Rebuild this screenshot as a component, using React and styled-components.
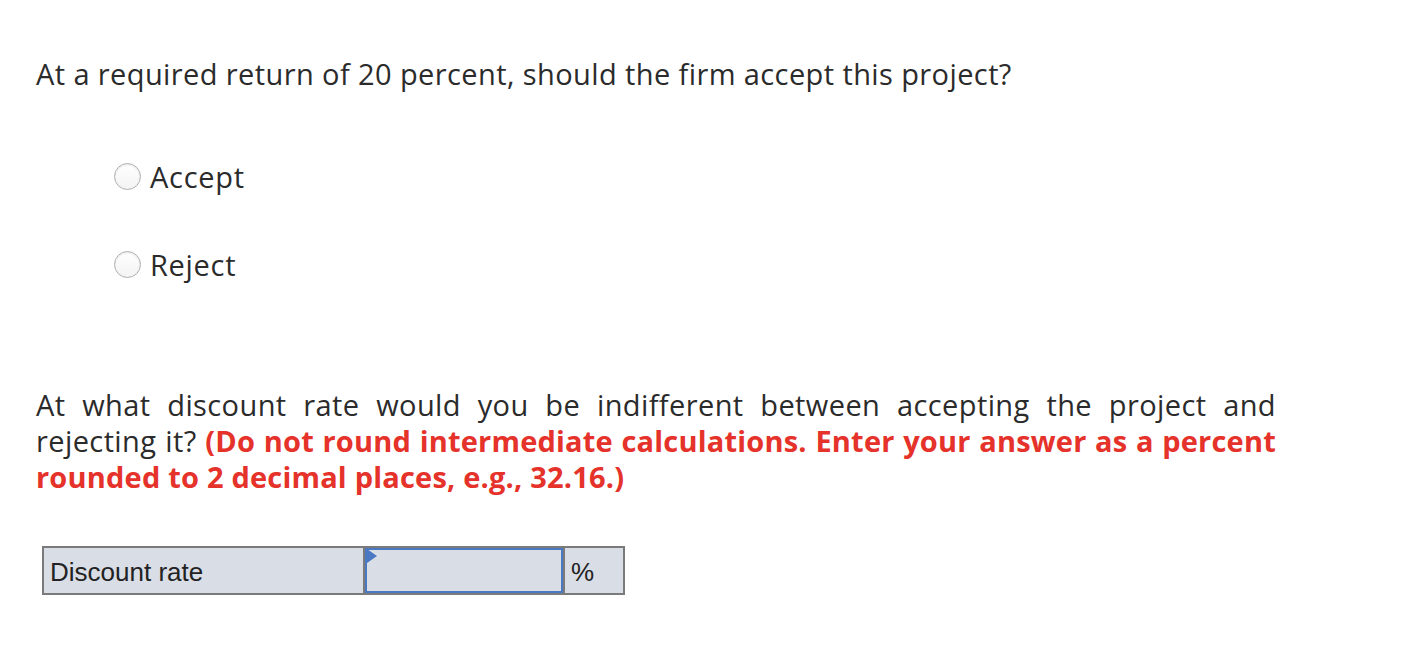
import React from 'react';
import styled, { createGlobalStyle } from 'styled-components';

const GlobalStyle = createGlobalStyle`
  html, body {
    margin: 0;
    padding: 0;
    background: #ffffff;
  }
  body {
    font-family: "Open Sans", Lato, Arial, sans-serif;
    color: #2b2b2b;
    font-variant-ligatures: none;
  }
`;

const Page = styled.div`
  width: 1240px;
  padding: 55px 0 0 36px;
`;

const Question = styled.p`
  margin: 0;
  font-size: 29px;
  line-height: 38px;
  letter-spacing: 0.4px;
`;

const Options = styled.div`
  display: flex;
  flex-direction: column;
  gap: 53px;
  padding: 66px 0 0 78px;
`;

const Option = styled.label`
  display: flex;
  align-items: center;
  gap: 9px;
  font-size: 29px;
  line-height: 35px;
  letter-spacing: 0.7px;
`;

const Radio = styled.span`
  width: 27px;
  height: 27px;
  border-radius: 50%;
  border: 1px solid #b0b0b0;
  background: linear-gradient(#ffffff, #f3f3f3);
  box-shadow: inset 0 1px 2px rgba(0, 0, 0, 0.1);
  box-sizing: border-box;
`;

const Paragraph = styled.div`
  margin: 105px 0 0;
  font-size: 29px;
  line-height: 36px;
  letter-spacing: 0.4px;
`;

const Line = styled.span`
  display: block;
  text-align: ${(p) => (p.$last ? 'left' : 'justify')};
  text-align-last: ${(p) => (p.$last ? 'left' : 'justify')};
`;

const Hint = styled.strong`
  color: #e5322a;
  font-weight: 700;
  letter-spacing: 0.2px;
`;

const Table = styled.table`
  margin: 51px 0 0 6px;
  border-collapse: collapse;
  font-family: "Liberation Sans", Arial, sans-serif;
  font-size: 26px;
  color: #222;
`;

const Cell = styled.td`
  border: 2px solid #7a7a7a;
  background: #d9dde6;
  height: 45px;
  padding: 3px 6px 0;
  width: ${(p) => p.$w}px;
  box-sizing: border-box;
`;

const InputCell = styled(Cell)`
  padding: 0;
`;

const Field = styled.div`
  height: 45px;
  border: 2px solid #4a78c2;
  box-sizing: border-box;
  position: relative;
`;

const Marker = styled.span`
  position: absolute;
  left: 0;
  top: -1px;
  width: 0;
  height: 0;
  border-top: 7px solid transparent;
  border-bottom: 7px solid transparent;
  border-left: 10px solid #4a78c2;
`;

export default function App() {
  return (
    <>
      <GlobalStyle />
      <Page>
        <Question>At a required return of 20 percent, should the firm accept this project?</Question>
        <Options>
          <Option>
            <Radio />
            Accept
          </Option>
          <Option>
            <Radio />
            Reject
          </Option>
        </Options>
        <Paragraph>
          <Line>At what discount rate would you be indifferent between accepting the project and</Line>
          <Line>
            rejecting it?{' '}
            <Hint>(Do not round intermediate calculations. Enter your answer as a percent</Hint>
          </Line>
          <Line $last>
            <Hint>rounded to 2 decimal places, e.g., 32.16.)</Hint>
          </Line>
        </Paragraph>
        <Table>
          <tbody>
            <tr>
              <Cell $w={321}>Discount rate</Cell>
              <InputCell $w={200}>
                <Field>
                  <Marker />
                </Field>
              </InputCell>
              <Cell $w={60}>%</Cell>
            </tr>
          </tbody>
        </Table>
      </Page>
    </>
  );
}
